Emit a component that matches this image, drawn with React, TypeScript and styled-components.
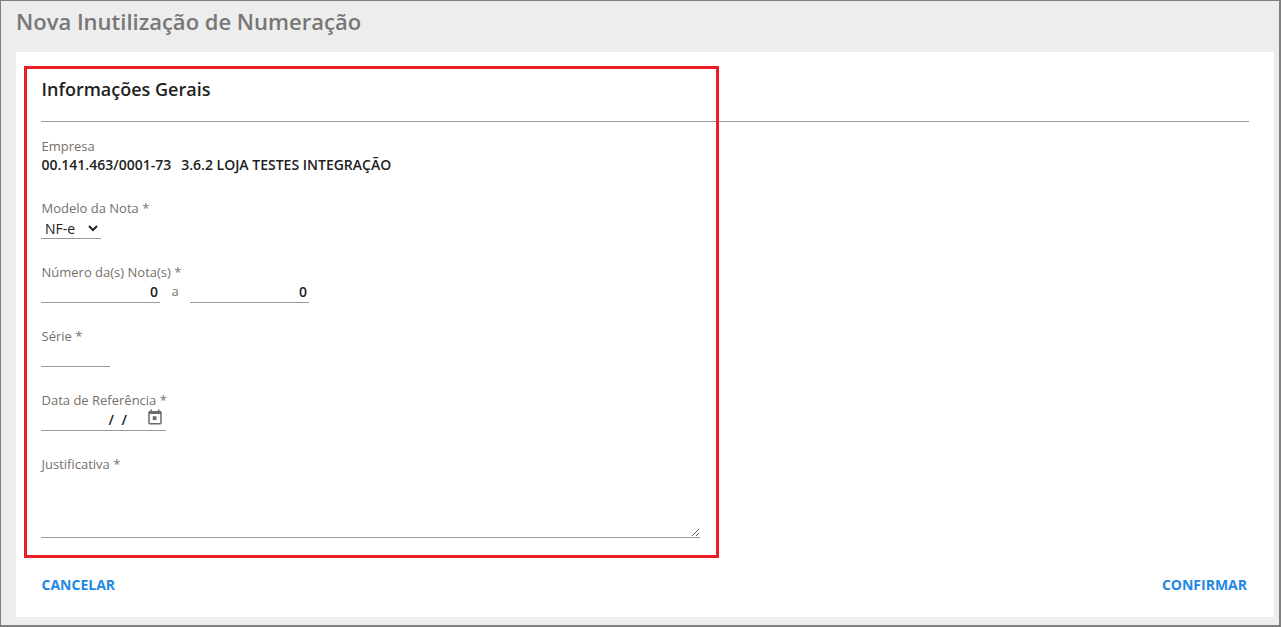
import React from "react";
import styled, { createGlobalStyle } from "styled-components";

const Global = createGlobalStyle`
  html, body { margin: 0; padding: 0; background: #fff; }
  body { font-family: "Open Sans", "Liberation Sans", sans-serif; }
  * { box-sizing: border-box; }
`;
const Page = styled.div`
  width: 1281px; height: 627px; background: #ededed;
  border: 1px solid #808080; border-bottom-width: 2px; border-right-width: 2px;
  padding: 0 5px 8px 15px; display: flex; flex-direction: column; overflow: hidden;
`;
const PageTitle = styled.h1`
  margin: 0; height: 51px; padding: 5px 0 0 0; font-size: 22px; line-height: 30px;
  font-weight: 600; color: #777;
`;
const Panel = styled.main`
  position: relative; flex: 1; background: #fff; padding: 0 25px; display: flex; flex-direction: column;
`;
const Highlight = styled.div`
  position: absolute; left: 8px; top: 14px; width: 695px; height: 492px;
  border: 3px solid #ed1c24; pointer-events: none;
`;
const SectionTitle = styled.h2`
  margin: 0; height: 70px; padding: 24px 0 0 0.5px; font-size: 18px; line-height: 26px;
  font-weight: 600; color: #1f1f1f; border-bottom: 1px solid #999;
`;
const Field = styled.div<{ $h: number; $top?: number }>`
  height: ${p => p.$h}px; padding-top: ${p => p.$top ?? 0}px;
  display: flex; flex-direction: column; align-items: flex-start;
`;
const Label = styled.label`
  font-size: 13px; line-height: 18px; color: #77706a; display: block; padding-left: 0.5px;
`;
const Value = styled.div`
  font-size: 14px; line-height: 20px; font-weight: 600; color: #222; display: flex; gap: 10px; padding-left: 0.5px;
`;
const Select = styled.select`
  width: 60px; height: 21px; border: 0; border-bottom: 1px solid #999; background: #fff;
  font-family: inherit; font-size: 14px; font-weight: 500; color: #222; padding: 0; outline: none; margin-top: 1px;
`;
const Row = styled.div`
  display: flex; align-items: flex-start;
`;
const NumberInput = styled.input<{ $w: number }>`
  width: ${p => p.$w}px; height: 22px; border: 0; border-bottom: 1px solid #999; outline: none;
  font-family: inherit; font-size: 14px; font-weight: 600; color: #222; text-align: right; padding: 0 2px 0 0;
  background: transparent; border-radius: 0;
`;
const Between = styled.span`
  width: 30px; text-align: center; font-size: 13px; color: #77706a; line-height: 20px;
`;
const DateBox = styled.div`
  width: 125px; height: 22px; border-bottom: 1px solid #999; display: flex; align-items: center; position: relative;
`;
const Slashes = styled.span`
  margin-left: 67.5px; font-size: 14px; font-weight: 600; color: #222; word-spacing: 4px; line-height: 20px;
  white-space: pre;
`;
const CalendarIcon = styled.svg`
  position: absolute; left: 105px; top: -1px; width: 18px; height: 18px; fill: #6b6b6b;
`;
const TextArea = styled.textarea`
  width: 659px; height: 65px; border: 0; border-bottom: 1px solid #999; outline: none;
  font-family: inherit; font-size: 14px; padding: 0; margin-top: 1px; background: transparent; display: block;
`;
const Actions = styled.div`
  display: flex; justify-content: space-between; padding: 37px 2px 0 0.5px;
`;
const ActionButton = styled.button`
  border: 0; background: none; padding: 0; font-family: inherit; font-size: 14px; line-height: 19px;
  font-weight: 700; color: #1e88e5; cursor: pointer;
`;

export default function App() {
  return (
    <>
      <Global />
      <Page>
        <PageTitle>Nova Inutilização de Numeração</PageTitle>
        <Panel>
          <Highlight />
          <SectionTitle>Informações Gerais</SectionTitle>
          <Field $h={77} $top={15}>
            <Label>Empresa</Label>
            <Value><span>00.141.463/0001-73</span><span>3.6.2 LOJA TESTES INTEGRAÇÃO</span></Value>
          </Field>
          <Field $h={64}>
            <Label>Modelo da Nota *</Label>
            <Select defaultValue="NF-e"><option>NF-e</option><option>NFC-e</option></Select>
          </Field>
          <Field $h={64}>
            <Label>Número da(s) Nota(s) *</Label>
            <Row>
              <NumberInput $w={119} defaultValue="0" />
              <Between>a</Between>
              <NumberInput $w={119} defaultValue="0" />
            </Row>
          </Field>
          <Field $h={64}>
            <Label>Série *</Label>
            <NumberInput $w={69} />
          </Field>
          <Field $h={64}>
            <Label>Data de Referência *</Label>
            <DateBox>
              <Slashes>/ /</Slashes>
              <CalendarIcon viewBox="0 0 24 24"><path d="M19 4h-1V2h-2v2H8V2H6v2H5c-1.100 0-2 .9-2 2v14c0 1.100.9 2 2 2h14c1.100 0 2-.9 2-2V6c0-1.100-.9-2-2-2zm0 16H5V8h14v12zM9 11h5v5H9z" /></CalendarIcon>
            </DateBox>
          </Field>
          <Field $h={83}>
            <Label>Justificativa *</Label>
            <TextArea />
          </Field>
          <Actions>
            <ActionButton>CANCELAR</ActionButton>
            <ActionButton>CONFIRMAR</ActionButton>
          </Actions>
        </Panel>
      </Page>
    </>
  );
}
